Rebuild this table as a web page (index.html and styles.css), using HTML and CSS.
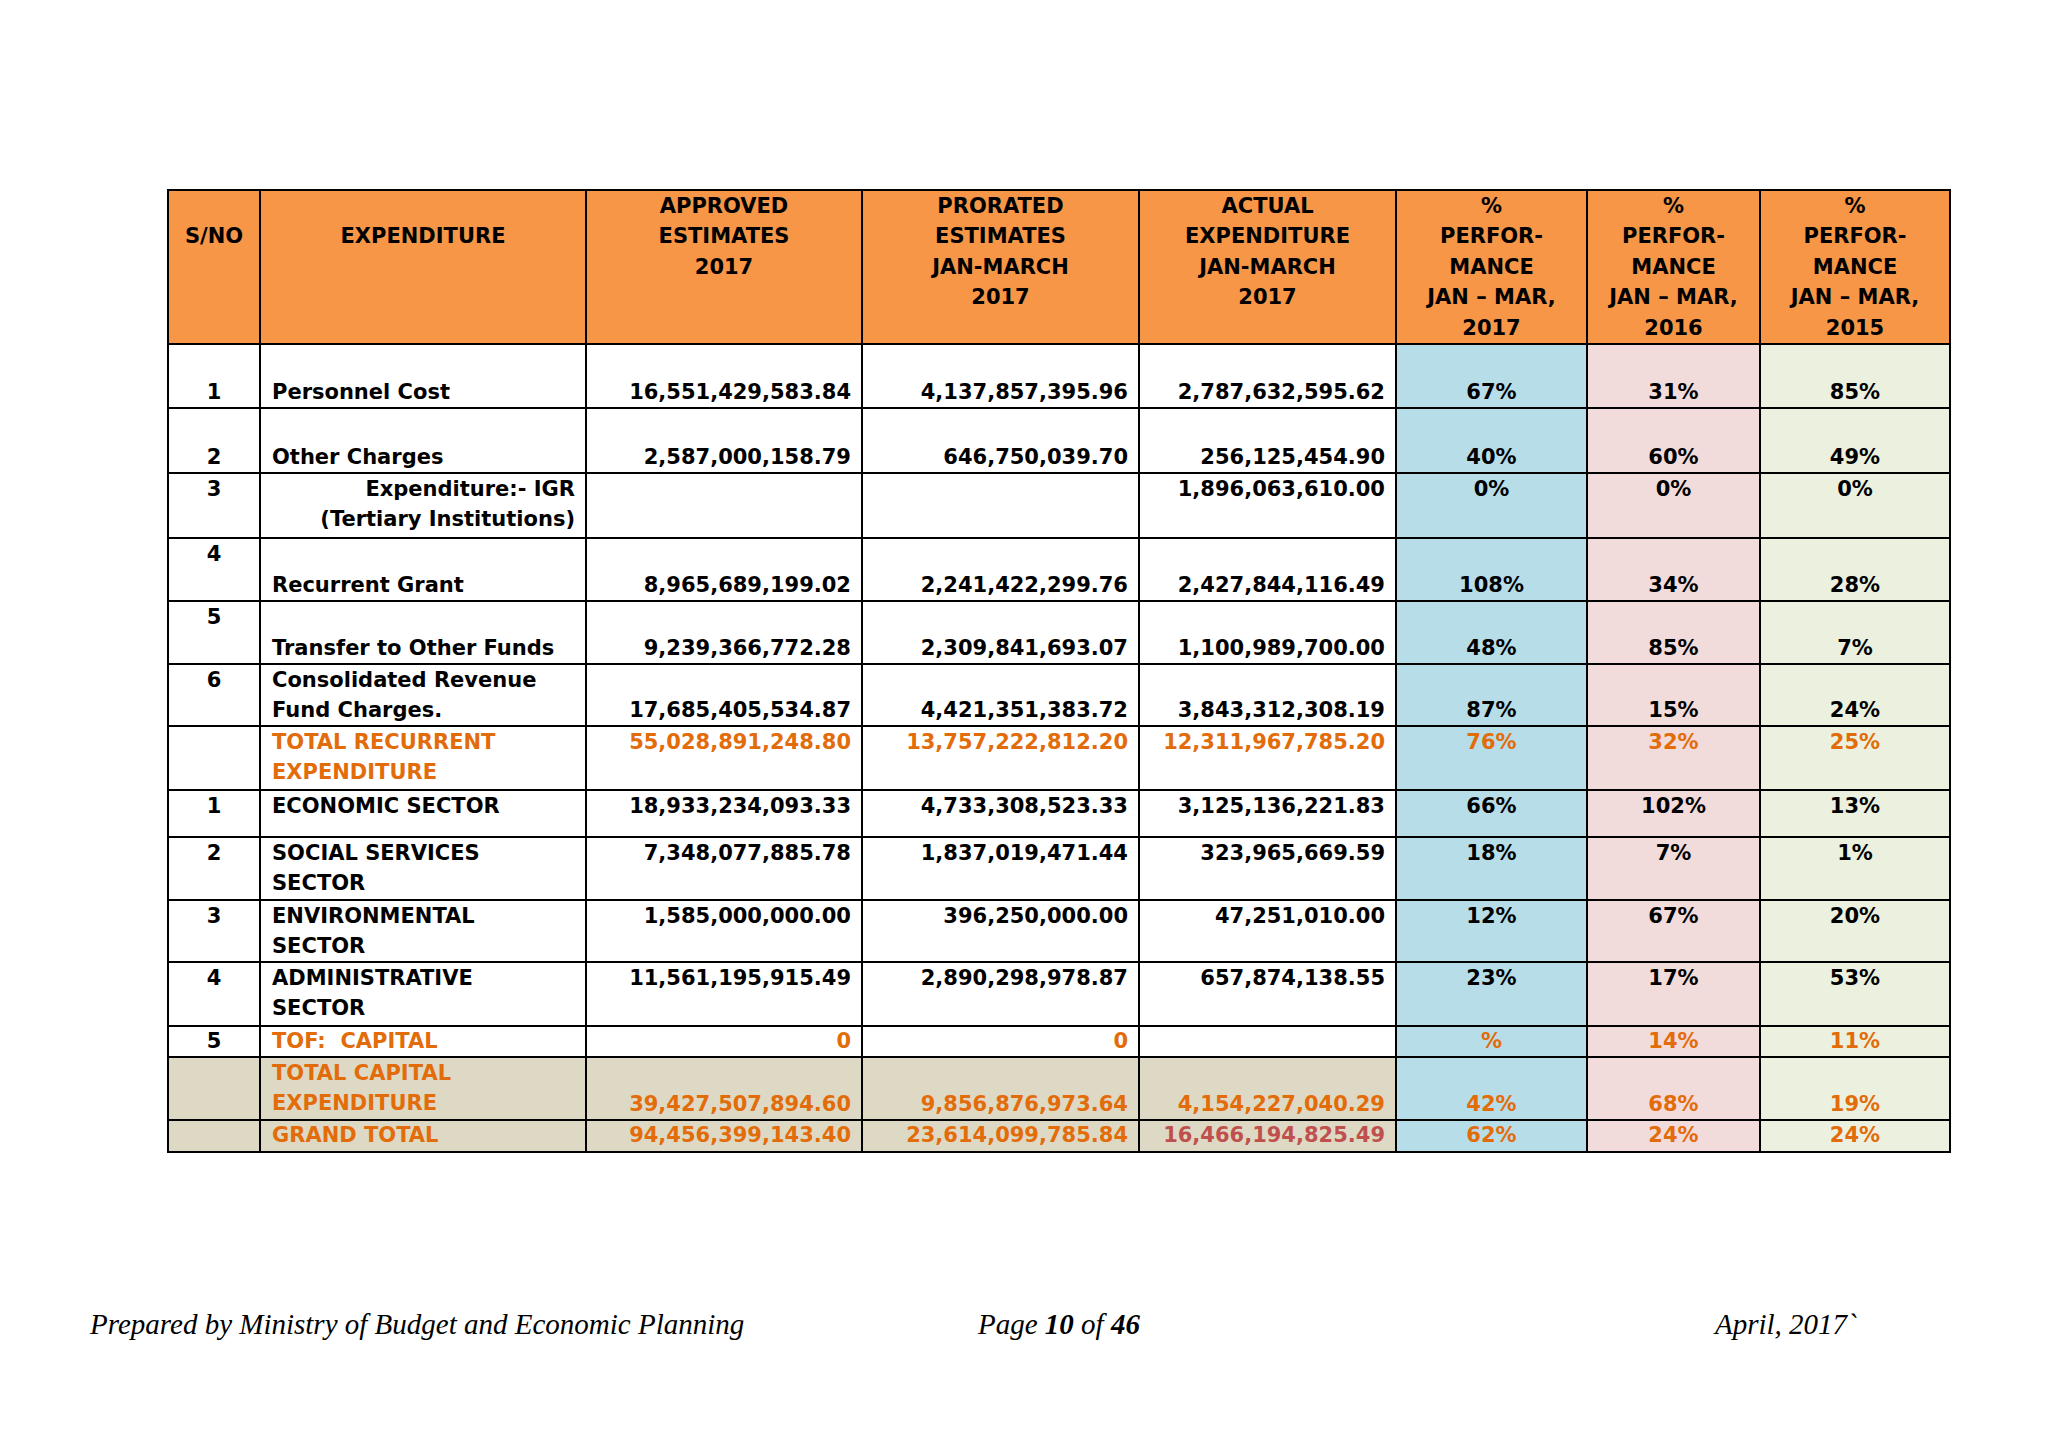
FILE: index.html
```html
<!DOCTYPE html>
<html lang="en">
<head>
<meta charset="utf-8">
<title>Expenditure Performance</title>
<link rel="stylesheet" href="styles.css">
</head>
<body>
<div class="page">
  <table class="budget">
    <colgroup>
      <col class="c-sno"><col class="c-exp"><col class="c-app"><col class="c-pro"><col class="c-act"><col class="c-p17"><col class="c-p16"><col class="c-p15">
    </colgroup>
    <thead>
      <tr class="h-head">
        <th class="pad1">S/NO</th>
        <th class="pad1">EXPENDITURE</th>
        <th>APPROVED<br>ESTIMATES<br>2017</th>
        <th>PRORATED<br>ESTIMATES<br>JAN-MARCH<br>2017</th>
        <th>ACTUAL<br>EXPENDITURE<br>JAN-MARCH<br>2017</th>
        <th>%<br>PERFOR-<br>MANCE<br>JAN – MAR,<br>2017</th>
        <th>%<br>PERFOR-<br>MANCE<br>JAN – MAR,<br>2016</th>
        <th>%<br>PERFOR-<br>MANCE<br>JAN – MAR,<br>2015</th>
      </tr>
    </thead>
    <tbody>
      <tr class="h64 bot">
        <td class="sno">1</td><td class="lbl">Personnel Cost</td>
        <td class="num">16,551,429,583.84</td><td class="num">4,137,857,395.96</td><td class="num">2,787,632,595.62</td>
        <td class="pct blue">67%</td><td class="pct pink">31%</td><td class="pct green">85%</td>
      </tr>
      <tr class="h65 bot">
        <td class="sno">2</td><td class="lbl">Other Charges</td>
        <td class="num">2,587,000,158.79</td><td class="num">646,750,039.70</td><td class="num">256,125,454.90</td>
        <td class="pct blue">40%</td><td class="pct pink">60%</td><td class="pct green">49%</td>
      </tr>
      <tr class="h65 top">
        <td class="sno">3</td><td class="lbl right">Expenditure:- IGR<br>(Tertiary Institutions)</td>
        <td class="num"></td><td class="num"></td><td class="num">1,896,063,610.00</td>
        <td class="pct blue">0%</td><td class="pct pink">0%</td><td class="pct green">0%</td>
      </tr>
      <tr class="h63 bot">
        <td class="sno vtop">4</td><td class="lbl">Recurrent Grant</td>
        <td class="num">8,965,689,199.02</td><td class="num">2,241,422,299.76</td><td class="num">2,427,844,116.49</td>
        <td class="pct blue">108%</td><td class="pct pink">34%</td><td class="pct green">28%</td>
      </tr>
      <tr class="h63 bot">
        <td class="sno vtop">5</td><td class="lbl">Transfer to Other Funds</td>
        <td class="num">9,239,366,772.28</td><td class="num">2,309,841,693.07</td><td class="num">1,100,989,700.00</td>
        <td class="pct blue">48%</td><td class="pct pink">85%</td><td class="pct green">7%</td>
      </tr>
      <tr class="h62 bot">
        <td class="sno vtop">6</td><td class="lbl vtop">Consolidated Revenue<br>Fund Charges.</td>
        <td class="num">17,685,405,534.87</td><td class="num">4,421,351,383.72</td><td class="num">3,843,312,308.19</td>
        <td class="pct blue">87%</td><td class="pct pink">15%</td><td class="pct green">24%</td>
      </tr>
      <tr class="h64 top orange">
        <td class="sno"></td><td class="lbl">TOTAL RECURRENT<br>EXPENDITURE</td>
        <td class="num">55,028,891,248.80</td><td class="num">13,757,222,812.20</td><td class="num">12,311,967,785.20</td>
        <td class="pct blue">76%</td><td class="pct pink">32%</td><td class="pct green">25%</td>
      </tr>
      <tr class="h47 top">
        <td class="sno">1</td><td class="lbl">ECONOMIC SECTOR</td>
        <td class="num">18,933,234,093.33</td><td class="num">4,733,308,523.33</td><td class="num">3,125,136,221.83</td>
        <td class="pct blue">66%</td><td class="pct pink">102%</td><td class="pct green">13%</td>
      </tr>
      <tr class="h63 top">
        <td class="sno">2</td><td class="lbl">SOCIAL SERVICES<br>SECTOR</td>
        <td class="num">7,348,077,885.78</td><td class="num">1,837,019,471.44</td><td class="num">323,965,669.59</td>
        <td class="pct blue">18%</td><td class="pct pink">7%</td><td class="pct green">1%</td>
      </tr>
      <tr class="h62 top">
        <td class="sno">3</td><td class="lbl">ENVIRONMENTAL<br>SECTOR</td>
        <td class="num">1,585,000,000.00</td><td class="num">396,250,000.00</td><td class="num">47,251,010.00</td>
        <td class="pct blue">12%</td><td class="pct pink">67%</td><td class="pct green">20%</td>
      </tr>
      <tr class="h64 top">
        <td class="sno">4</td><td class="lbl">ADMINISTRATIVE<br>SECTOR</td>
        <td class="num">11,561,195,915.49</td><td class="num">2,890,298,978.87</td><td class="num">657,874,138.55</td>
        <td class="pct blue">23%</td><td class="pct pink">17%</td><td class="pct green">53%</td>
      </tr>
      <tr class="h31 top">
        <td class="sno">5</td><td class="lbl org">TOF:&nbsp; CAPITAL</td>
        <td class="num org">0</td><td class="num org">0</td><td class="num"></td>
        <td class="pct blue org">%</td><td class="pct pink org">14%</td><td class="pct green org">11%</td>
      </tr>
      <tr class="h63 bot orange">
        <td class="sno tan"></td><td class="lbl tan vtop">TOTAL CAPITAL<br>EXPENDITURE</td>
        <td class="num tan">39,427,507,894.60</td><td class="num tan">9,856,876,973.64</td><td class="num tan">4,154,227,040.29</td>
        <td class="pct blue">42%</td><td class="pct pink">68%</td><td class="pct green">19%</td>
      </tr>
      <tr class="h32 top orange">
        <td class="sno tan"></td><td class="lbl tan">GRAND TOTAL</td>
        <td class="num tan">94,456,399,143.40</td><td class="num tan">23,614,099,785.84</td><td class="num tan red">16,466,194,825.49</td>
        <td class="pct blue">62%</td><td class="pct pink">24%</td><td class="pct green">24%</td>
      </tr>
    </tbody>
  </table>

  <footer class="foot">
    <span>Prepared by Ministry of Budget and Economic Planning</span>
    <span>Page <b>10</b> of <b>46</b></span>
    <span>April, 2017`</span>
  </footer>
</div>
</body>
</html>
```

FILE: styles.css
```css
html, body {
  margin: 0;
  padding: 0;
  background: #ffffff;
}

.page {
  width: 2048px;
  height: 1448px;
  box-sizing: border-box;
  padding: 189px 0 0 167px;
}

.budget {
  width: 1782px;
  table-layout: fixed;
  border-collapse: collapse;
  font-family: "DejaVu Sans", "Liberation Sans", sans-serif;
  font-weight: bold;
  font-size: 21px;
  line-height: 30px;
  color: #000;
  border: 2px solid #000;
}

.c-sno { width: 92px; }
.c-exp { width: 326px; }
.c-app { width: 276px; }
.c-pro { width: 277px; }
.c-act { width: 257px; }
.c-p17 { width: 191px; }
.c-p16 { width: 173px; }
.c-p15 { width: 190px; }

.budget th,
.budget td {
  border: 2px solid #000;
  padding: 0 10px 0 11px;
  overflow: hidden;
  white-space: nowrap;
}

.budget th {
  background: #f79646;
  text-align: center;
  vertical-align: top;
  font-weight: bold;
  line-height: 30.4px;
  padding: 0 4px;
}

.budget th.pad1 { padding-top: 30px; }

.h-head { height: 154px; }
.h64 { height: 64px; }
.h65 { height: 65px; }
.h63 { height: 63px; }
.h62 { height: 62px; }
.h47 { height: 47px; }
.h31 { height: 31px; line-height: 29px; }
.h32 { height: 32px; line-height: 29px; }

.top td { vertical-align: top; }
.bot td { vertical-align: bottom; }
.budget td.vtop { vertical-align: top; }

.sno { text-align: center; }
.budget td.sno { padding: 0; }
.lbl { text-align: left; }
.lbl.right { text-align: right; }
.num { text-align: right; }
.budget td.pct { text-align: center; padding: 0; }

.blue { background: #b7dde8; }
.pink { background: #f2dcdb; }
.green { background: #ebf1de; }
.tan { background: #ddd9c4; }

.orange td { color: #e36c0a; }
.org { color: #e36c0a; }
.orange td.red { color: #c0504d; }

.foot {
  display: grid;
  grid-template-columns: 888px 737px auto;
  margin: 155px 0 0 -77px;
  font-family: "Liberation Serif", "Times New Roman", serif;
  font-style: italic;
  font-size: 29px;
  line-height: 32px;
  color: #000;
}

.foot b { font-weight: bold; }
```
